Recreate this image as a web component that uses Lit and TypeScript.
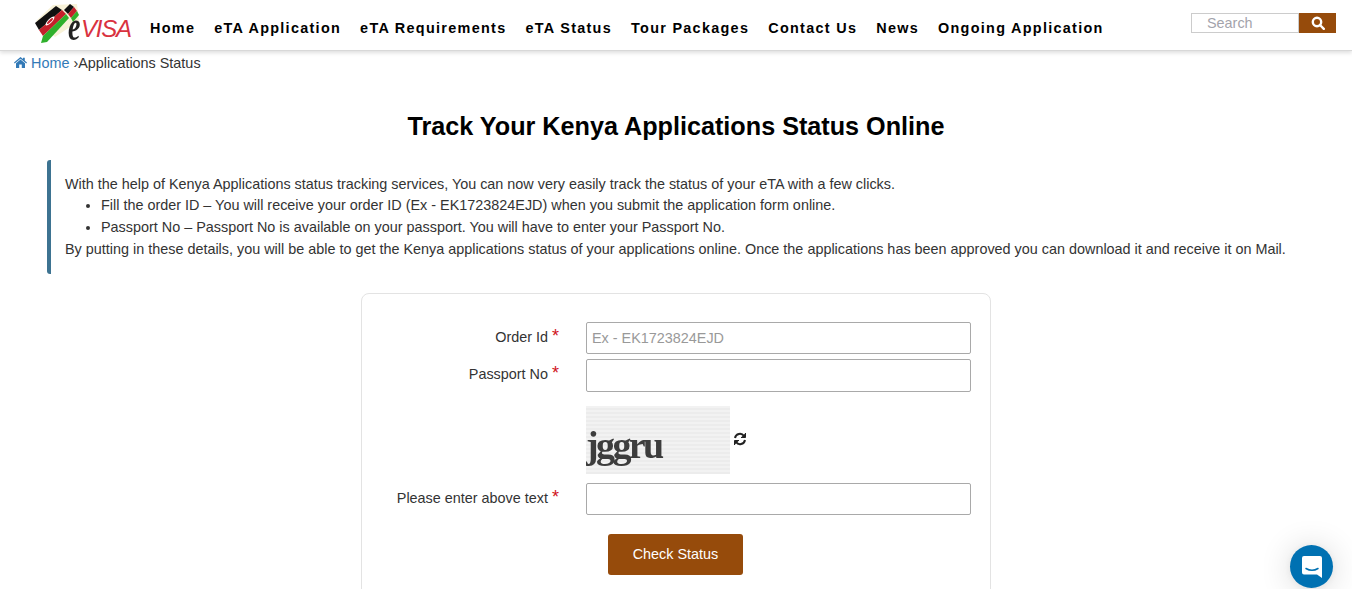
import { LitElement, html, css } from "lit";
import { customElement } from "lit/decorators.js";

const NAV = ["Home", "eTA Application", "eTA Requirements", "eTA Status", "Tour Packages", "Contact Us", "News", "Ongoing Application"];

@customElement("app-root")
export class AppRoot extends LitElement {
  static styles = css`
    :host { display: block; height: 589px; overflow: hidden; position: relative; font-family: "Liberation Sans", Arial, sans-serif; font-size: 14.4px; color: #333; background: #fff; }
    * { box-sizing: border-box; }
    header { height: 51px; display: flex; align-items: flex-start; border-bottom: 1px solid #d8d8d8; box-shadow: 0 2px 4px rgba(0,0,0,.13); padding-left: 35px; }
    .logo { width: 97px; height: 42px; margin-top: 3px; position: relative; flex: none; }
    .logo svg { display: block; filter: blur(.3px); }
    .logo .e { position: absolute; left: 33px; top: 13px; font: italic bold 28px "Liberation Serif", serif; color: #222; line-height: 30px; transform: scaleY(1.4); transform-origin: 0 25px; }
    .logo .v { position: absolute; left: 46px; top: 12px; font: italic 24px "Liberation Sans", sans-serif; color: #d9323f; line-height: 28px; letter-spacing: -1.2px; }
    nav { display: flex; gap: 19px; margin-left: 18px; margin-top: 19px; }
    nav a { font-weight: 700; font-size: 14.4px; letter-spacing: 1.3px; color: #000; line-height: 18px; white-space: nowrap; }
    .search { margin-left: auto; margin-right: 16px; margin-top: 13px; display: flex; height: 20px; }
    .search .in { width: 108px; border: 1px solid #ccc; color: #a3a3ab; padding-left: 15px; line-height: 19px; font-size: 14.4px; }
    .search .btn { width: 37px; background: #964b0b; display: flex; align-items: center; justify-content: center; }
    .crumb { padding: 4px 14px 0; line-height: 18px; height: 19px; display: flex; align-items: center; white-space: pre; }
    .crumb .link { color: #337ab7; display: flex; align-items: center; gap: 4px; }
    h1 { margin: 41px 0 0; text-align: center; font-size: 25.2px; line-height: 30px; font-weight: 700; color: #000; }
    .note { margin: 19px 0 0 47px; width: 1260px; height: 114px; border-left: 4px solid #3d7391; border-radius: 3px; padding: 13.7px 0 0 14px; line-height: 21.7px; white-space: nowrap; }
    .note ul { margin: 0; padding-left: 36px; }
    .card { margin: 19px auto 0 361px; width: 630px; height: 320px; border: 1px solid #e3e3e3; border-radius: 8px; padding-top: 28px; }
    .row { display: flex; align-items: flex-start; }
    .lab { width: 197px; margin-right: 27px; text-align: right; line-height: 20px; padding-top: 5px; white-space: nowrap; }
    .lab b { color: #d0121b; font-weight: 400; font-size: 18px; line-height: 14px; }
    .input { width: 385px; height: 32px; border: 1px solid #a9a9a9; border-radius: 2px; color: #999; padding-left: 5px; line-height: 30px; }
    .r2 { margin-top: 5px; height: 33px; }
    .r2 .input { height: 33px; }
    .capt { margin: 14px 0 0 224px; display: flex; align-items: center; gap: 2px; height: 68px; }
    .capt svg { margin-top: -2px; }
    .img { width: 144px; height: 68px; position: relative; overflow: hidden;
      background: repeating-linear-gradient(0deg, #ececec 0 2px, #f2f2f2 2px 4px); }
    .img span { position: absolute; left: 0; top: 15px; font: 700 38px "Liberation Serif", serif; color: #3d3d3d; letter-spacing: -2.6px; line-height: 48px; filter: blur(.5px); }
    .r3 { margin-top: 9px; }
    .submit { margin: 19px 0 0 246px; width: 135px; height: 41px; padding-bottom: 2px; background: #964b0b; color: #fff; border-radius: 3px; display: flex; align-items: center; justify-content: center; }
    .chat { position: absolute; left: 1290px; top: 545px; width: 43px; height: 43px; border-radius: 50%; background: #0071b2; display: flex; align-items: center; justify-content: center; box-shadow: 0 1px 6px rgba(0,0,0,.06), 0 2px 32px rgba(0,0,0,.16); }
  `;

  render() {
    return html`
      <header>
        <div class="logo">
          <svg width="97" height="42" viewBox="0 0 97 42">
            <path d="M1 18 L18 2 L42 1 L44 18 L20 34 Z" fill="#f8f2d8"/>
            <path d="M0 20 L21 3 L27 7 L4 27 Z" fill="#111"/>
            <path d="M4 27 L27 7 L31 11 L8 33 Z" fill="#c5202b"/>
            <path d="M8 33 L31 11 L34 15 L12 39 L6 40 Z" fill="#2fb02c"/>
            <path d="M29 7 L35 1 L39 4 L33 11 Z" fill="#111"/>
            <path d="M33 11 L39 4 L42 8 L36 15 Z" fill="#c5202b"/>
            <path d="M36 15 L42 8 L44 12 L38 19 Z" fill="#2fb02c"/>
            <ellipse cx="15" cy="18" rx="6" ry="2" transform="rotate(-45 15 18)" fill="#fff"/>
            <ellipse cx="15" cy="18" rx="4" ry="1.2" transform="rotate(-45 15 18)" fill="#c5202b"/>
          </svg>
          <span class="e">e</span><span class="v">VISA</span>
        </div>
        <nav>${NAV.map((n) => html`<a>${n}</a>`)}</nav>
        <div class="search">
          <div class="in">Search</div>
          <div class="btn">
            <svg width="14" height="14" viewBox="0 0 14 14" fill="none" stroke="#fff" stroke-width="2.4"><circle cx="6" cy="6" r="4.2"/><path d="M9 9 L12.8 12.8" stroke-linecap="round"/></svg>
          </div>
        </div>
      </header>
      <div class="crumb"><span class="link"><svg width="13" height="11" viewBox="0 0 13 11" fill="#337ab7"><path d="M6.5 0 L9 2.1 V.8 H10.8 V3.7 L13 5.6 L12.3 6.5 L6.5 1.8 L.7 6.5 L0 5.6 Z M2 6.2 L6.5 2.5 L11 6.2 V11 H7.8 V7.6 H5.2 V11 H2 Z"/></svg>Home</span> ›Applications Status</div>
      <h1>Track Your Kenya Applications Status Online</h1>
      <div class="note">
        With the help of Kenya Applications status tracking services, You can now very easily track the status of your eTA with a few clicks.
        <ul>
          <li>Fill the order ID – You will receive your order ID (Ex - EK1723824EJD) when you submit the application form online.</li>
          <li>Passport No – Passport No is available on your passport. You will have to enter your Passport No.</li>
        </ul>
        By putting in these details, you will be able to get the Kenya applications status of your applications online. Once the applications has been approved you can download it and receive it on Mail.
      </div>
      <div class="card">
        <div class="row"><div class="lab">Order Id <b>*</b></div><div class="input">Ex - EK1723824EJD</div></div>
        <div class="row r2"><div class="lab">Passport No <b>*</b></div><div class="input"></div></div>
        <div class="capt">
          <div class="img"><span>jggru</span></div>
          <svg width="16" height="14" viewBox="0 0 16 14" fill="none" stroke="#222" stroke-width="2"><path d="M3 6 A5 5 0 0 1 12 4"/><path d="M13 8 A5 5 0 0 1 4 10"/><path d="M13.5 1 V5.5 H9" fill="#222" stroke-width="1"/><path d="M2.5 13 V8.5 H7" fill="#222" stroke-width="1"/></svg>
        </div>
        <div class="row r3"><div class="lab">Please enter above text <b>*</b></div><div class="input"></div></div>
        <div class="submit">Check Status</div>
      </div>
      <div class="chat">
        <svg width="20" height="22" viewBox="0 0 20 22" fill="#fff"><path d="M2 0 H18 A2 2 0 0 1 20 2 V22 L15 18.5 H2 A2 2 0 0 1 0 16.5 V2 A2 2 0 0 1 2 0 Z"/><path d="M4 12.5 Q10 16 16 12.5" stroke="#0071b2" stroke-width="1.5" fill="none" stroke-linecap="round"/></svg>
      </div>
    `;
  }
}
